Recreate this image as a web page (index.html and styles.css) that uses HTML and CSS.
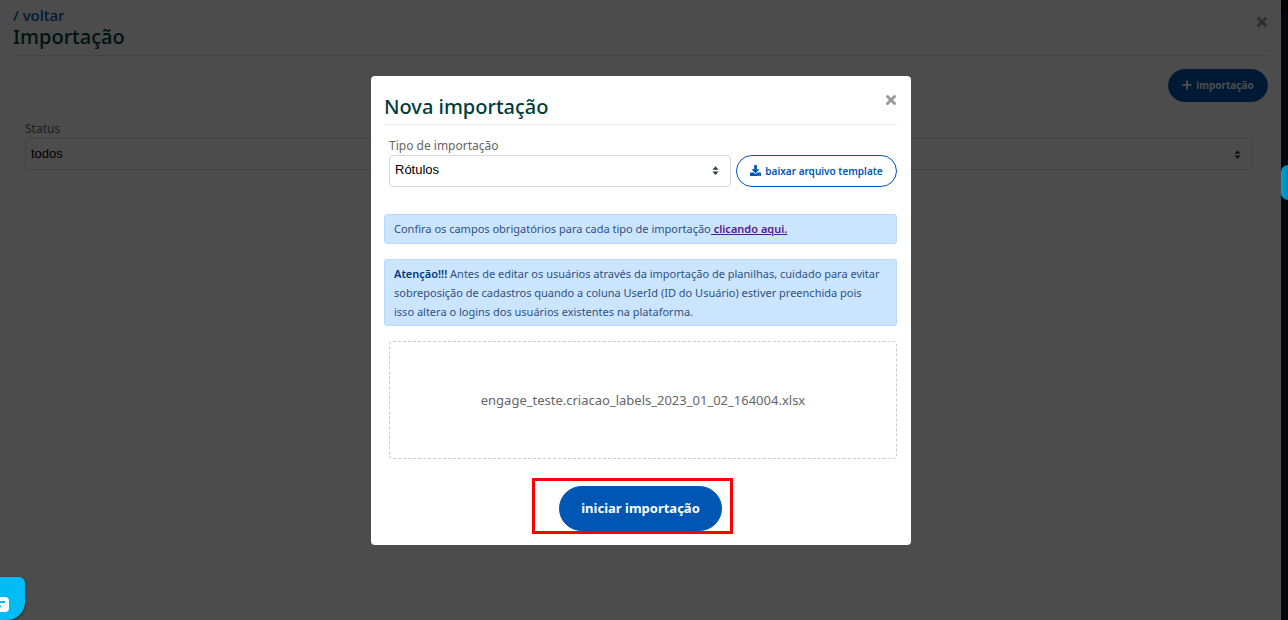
FILE: index.html
```html
<!DOCTYPE html>
<html lang="pt-BR">
<head>
<meta charset="utf-8">
<meta name="viewport" content="width=device-width, initial-scale=1">
<title>Importação</title>
<link rel="stylesheet" href="styles.css">
</head>
<body>
<div class="layout">
  <main class="page">
    <header class="page-header">
      <div>
        <a class="back" href="#">/ voltar</a>
        <h1 class="title">Importação</h1>
      </div>
      <button class="close" type="button" aria-label="Fechar página">
        <svg viewBox="0 0 12 12"><path d="M2.5 2.5 9.5 9.5M9.5 2.5 2.5 9.5"/></svg>
      </button>
    </header>
    <div class="toolbar">
      <button class="btn btn-new" type="button">
        <svg class="plus" viewBox="0 0 10 10"><path d="M5 .5V9.500M.5 5H9.500"/></svg>
        importação
      </button>
    </div>
    <div class="filter">
      <label class="label" for="status">Status</label>
      <div class="select-wrap">
        <select class="select" id="status"><option>todos</option></select>
        <svg class="caret" viewBox="0 0 8 10"><path d="M4 0 7.5 4H.5ZM4 10 .5 6H7.5Z"/></svg>
      </div>
    </div>
  </main>
  <aside class="rail"></aside>
</div>

<div class="overlay">
  <section class="modal" role="dialog" aria-labelledby="modal-title">
    <header class="modal-header">
      <h2 class="title" id="modal-title">Nova importação</h2>
      <button class="close" type="button" aria-label="Fechar">
        <svg viewBox="0 0 12 12"><path d="M2.5 2.5 9.5 9.5M9.5 2.5 2.5 9.5"/></svg>
      </button>
    </header>
    <div class="type-row">
      <div class="type-field">
        <label class="label" for="tipo">Tipo de importação</label>
        <div class="select-wrap">
          <select class="select" id="tipo"><option>Rótulos</option></select>
          <svg class="caret" viewBox="0 0 8 10"><path d="M4 0 7.5 4H.5ZM4 10 .5 6H7.5Z"/></svg>
        </div>
      </div>
      <button class="btn btn-outline" type="button">
        <svg class="download" viewBox="0 0 512 512"><path d="M216 0h80c13 0 24 11 24 24v168h88c18 0 27 22 14 34L270 378c-8 8-20 8-28 0L90 226c-13-12-4-34 14-34h88V24c0-13 11-24 24-24zm296 376v112c0 13-11 24-24 24H24c-13 0-24-11-24-24V376c0-13 11-24 24-24h147l49 49c20 20 52 20 72 0l49-49h147c13 0 24 11 24 24zm-124 88a20 20 0 1 0-40 0 20 20 0 0 0 40 0zm64 0a20 20 0 1 0-40 0 20 20 0 0 0 40 0z"/></svg>
        baixar arquivo template
      </button>
    </div>
    <p class="alert">Confira os campos obrigatórios para cada tipo de importação<a class="alert-link" href="#"> clicando aqui.</a></p>
    <p class="alert"><strong>Atenção!!!</strong> Antes de editar os usuários através da importação de planilhas, cuidado para evitar sobreposição de cadastros quando a coluna UserId (ID do Usuário) estiver preenchida pois isso altera o logins dos usuários existentes na plataforma.</p>
    <div class="dropzone">engage_teste.criacao_labels_2023_01_02_164004.xlsx</div>
    <div class="actions">
      <div class="highlighted">
        <button class="btn btn-start" type="button">iniciar importação</button>
      </div>
    </div>
  </section>
</div>

<div class="side-tab"></div>
<button class="chat" type="button" aria-label="Chat">
  <svg viewBox="0 0 18 16"><path fill="#fff" d="M4 0H14Q18 0 18 4V11Q18 15 14 15H4Q0 15 0 11V4Q0 0 4 0Z"/><path fill="none" stroke="#00bcf5" stroke-width="2" d="M4 5H14M4 9.500H10"/></svg>
</button>
</body>
</html>
```
FILE: styles.css
```css
* {
  box-sizing: border-box;
}

body {
  margin: 0;
  font-family: "Noto Sans", "Open Sans", sans-serif;
  font-size: 12px;
  color: #666;
}

button {
  font-family: inherit;
  cursor: pointer;
}

.layout {
  display: flex;
  min-height: 100vh;
}

.page {
  flex: 1;
  padding: 5px 13px 6px;
  background: #fff;
}

.rail {
  width: 7px;
  background: #001b38;
  border-top: 14px solid #080808;
}

.page-header {
  display: flex;
  justify-content: space-between;
  align-items: flex-start;
  height: 51px;
  border-bottom: 1px solid #e6e6e6;
}

.back {
  display: block;
  font-size: 15px;
  line-height: 20px;
  font-weight: 500;
  color: #0056b3;
  text-decoration: none;
}

.title {
  margin: 0;
  font-size: 20px;
  line-height: 24px;
  font-weight: 500;
  color: #003c38;
}

.close {
  display: flex;
  padding: 0;
  border: 0;
  background: none;
}

.close svg {
  width: 12px;
  height: 12px;
  fill: none;
  stroke: #999;
  stroke-width: 3;
  stroke-linecap: round;
}

.page-header .close {
  margin-top: 11px;
}

.toolbar {
  display: flex;
  justify-content: flex-end;
  padding-top: 13px;
}

.btn {
  display: flex;
  align-items: center;
  justify-content: center;
  border: 1px solid #0056b3;
  border-radius: 24px;
  background: #0056b3;
  color: #fff;
  font-weight: 700;
  white-space: nowrap;
}

.btn-new {
  width: 100px;
  height: 33px;
  padding: 0 0 2px;
  gap: 4px;
  font-size: 10px;
}

.plus {
  width: 10px;
  height: 10px;
  fill: none;
  stroke: #fff;
  stroke-width: 2;
}

.filter {
  padding: 18px 15px 0 12px;
}

.label {
  display: block;
  font-size: 12px;
  line-height: 18px;
}

.select-wrap {
  display: grid;
  align-items: center;
}

.select {
  grid-area: 1 / 1;
  width: 100%;
  height: 32px;
  padding: 0 5px 2px;
  appearance: none;
  border: 1px solid #d9d9d9;
  border-radius: 4px;
  background: #fff;
  color: #000;
  font-family: "Liberation Sans", Arial, sans-serif;
  font-size: 13px;
}

.caret {
  grid-area: 1 / 1;
  justify-self: end;
  width: 7px;
  height: 9px;
  margin-right: 12px;
  fill: #343a40;
  pointer-events: none;
}

.overlay {
  position: fixed;
  inset: 0;
  display: flex;
  align-items: center;
  justify-content: center;
  padding-right: 6px;
  background: rgba(0, 0, 0, 0.7);
}

.modal {
  width: 540px;
  max-width: 100%;
  padding: 18px 14px 14px 13px;
  border-radius: 4px;
  background: #fff;
}

.modal-header {
  display: flex;
  justify-content: space-between;
  align-items: flex-start;
  padding-bottom: 5px;
  border-bottom: 1px solid #e6e6e6;
}

.modal-header .title {
  margin-top: 1px;
}

.type-row {
  display: flex;
  align-items: flex-end;
  gap: 5px;
  margin: 12px 0 27px 5px;
}

.type-field {
  flex: 1;
}

.btn-outline {
  width: 161px;
  height: 32px;
  padding: 0;
  gap: 4px;
  background: #fff;
  color: #0056b3;
  font-size: 10px;
  font-weight: 600;
}

.download {
  width: 11px;
  height: 11px;
  fill: #0056b3;
}

.alert {
  min-height: 30px;
  margin: 0 0 15px;
  padding: 4px 14px 4px 9px;
  border: 1px solid #b8daff;
  border-radius: 3px;
  background: #cce5ff;
  color: #2c5184;
  font-size: 11px;
  line-height: 19px;
}

.alert strong {
  color: #003a78;
  font-weight: 600;
}

.alert-link {
  color: #551a8b;
  font-weight: 600;
}

.dropzone {
  display: flex;
  align-items: center;
  justify-content: center;
  min-height: 118px;
  margin-left: 5px;
  border: 1px dashed #ccc;
  border-radius: 4px;
  font-size: 13px;
}

.actions {
  display: flex;
  justify-content: center;
  padding-top: 27px;
}

.highlighted {
  position: relative;
}

.highlighted::after {
  content: "";
  position: absolute;
  inset: -8px -11px -3px -27px;
  border: 3px solid #f00;
  pointer-events: none;
}

.btn-start {
  width: 163px;
  height: 45px;
  padding: 0;
  font-size: 13px;
}

.side-tab {
  position: fixed;
  top: 165px;
  right: 0;
  width: 7px;
  height: 35px;
  border-radius: 7px 0 0 7px;
  background: linear-gradient(90deg, #00a0dc, #0086b8);
}

.chat {
  position: fixed;
  left: 0;
  bottom: 0;
  display: flex;
  align-items: flex-end;
  width: 25px;
  height: 43px;
  padding: 0 0 7px;
  border: 0;
  border-radius: 0 6px 18px 0;
  background: #00bcf5;
  box-shadow: 0 1px 3px rgba(0, 0, 0, 0.5);
  overflow: hidden;
}

.chat svg {
  flex: none;
  width: 18px;
  height: 16px;
  margin-left: -9px;
}
```
